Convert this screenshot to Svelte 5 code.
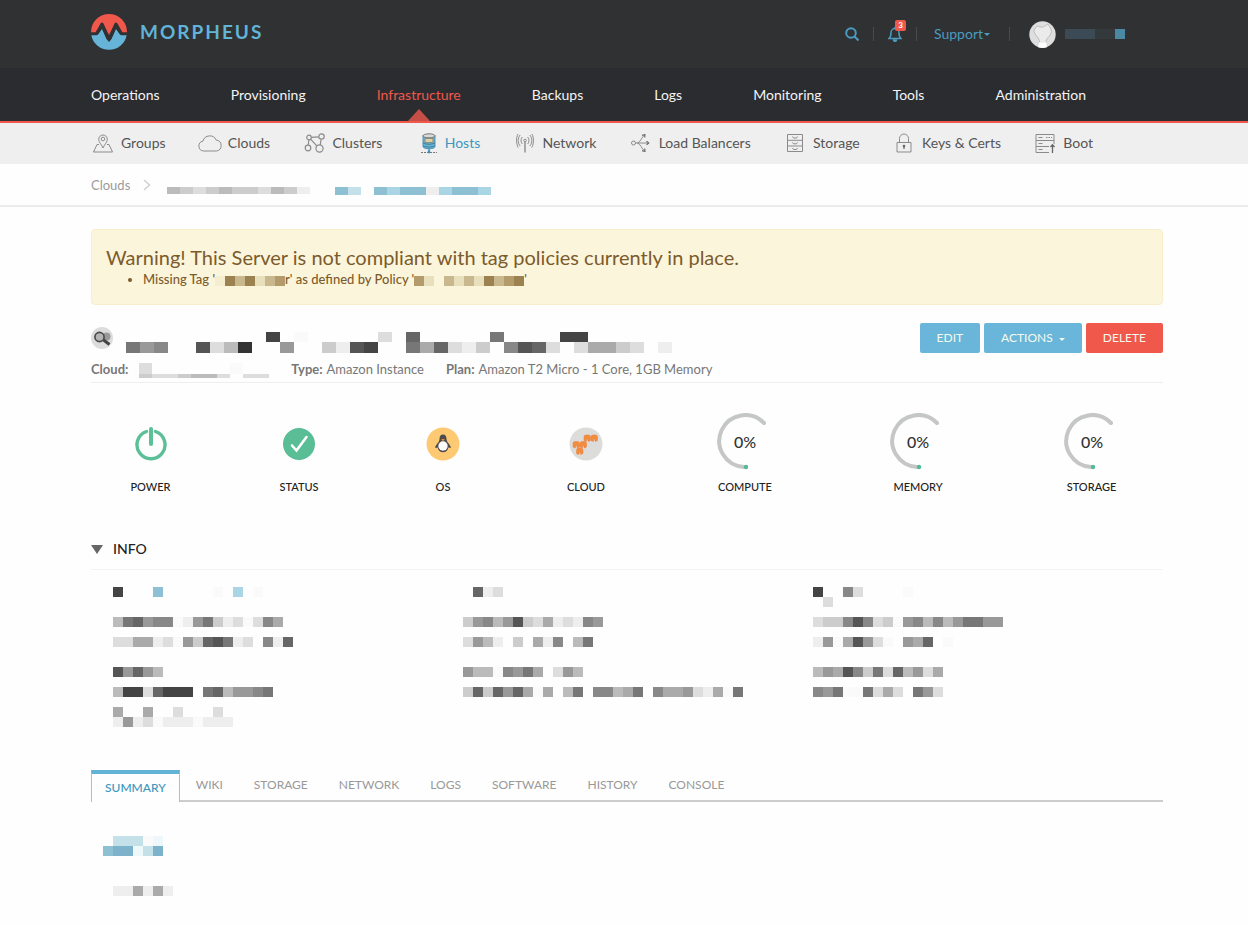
<script>
  const nav = ['Operations', 'Provisioning', 'Infrastructure', 'Backups', 'Logs', 'Monitoring', 'Tools', 'Administration'];
  const subnav = [
    ['Groups', 'groups'], ['Clouds', 'cloud'], ['Clusters', 'clusters'], ['Hosts', 'hosts'], ['Network', 'network'],
    ['Load Balancers', 'balancer'], ['Storage', 'storage'], ['Keys & Certs', 'lock'], ['Boot', 'boot']
  ];
  const tabs = ['SUMMARY', 'WIKI', 'STORAGE', 'NETWORK', 'LOGS', 'SOFTWARE', 'HISTORY', 'CONSOLE'];

  // One letter per cell: hex digits are greys, capitals are tints.
  const tints = {
    f: '#fafafa', A: '#7db2cb', B: '#8dc0d3', C: '#a9d5e4', D: '#c4e1ea', E: '#eef7fa',
    P: '#9c8251', Q: '#b39b6b', R: '#c9b88e', S: '#e8dfbd', T: '#f5edd0',
    U: '#3b4a54', V: '#34393c', W: '#4b88a4'
  };
  const colour = (c) => tints[c] ?? `#${c}${c}${c}`;

  function cells(rows, w, heights) {
    const out = [];
    let y = 0;
    rows.forEach((row, r) => {
      [...row].forEach((c, i) => {
        if (c !== '.') out.push({ x: i * w, y, h: heights[r], fill: colour(c) });
      });
      y += heights[r];
    });
    return { out, width: Math.max(...rows.map((r) => r.length)) * w, height: y };
  }

  // Columns of groups; each group is a list of lines, each line one or two cell rows.
  const info = [
    [
      [['4...B.....f.C.f']],
      [['b76988fe97cedfd8a'], ['ddaaedf9c657ed.8e6']],
      [['5969b'], ['b44d6444.76b9987'], ['a..a..d...d', 'e9edfeeefeee']]
    ],
    [
      [['.6ed']],
      [['c98b95cdaede89'], ['d9be.c.ae8.b7']],
      [['9bbf897a.d9b'], ['c6c696afa.b7.88ba7.8aa9deaf7']]
    ],
    [
      [['4..8d....f', '.d']],
      [['dcc858dcf98b8b97799'], ['e9fa59df.9a6.f']],
      [['b9a58c7d6b9da'], ['897ff7dad.79d']]
    ]
  ];
</script>

{#snippet mosaic(rows, w = 10, heights = [10, 10])}
  {@const m = cells(rows, w, heights)}
  <svg class="mosaic" width={m.width} height={m.height} shape-rendering="crispEdges" aria-hidden="true">
    {#each m.out as c}<rect x={c.x} y={c.y} width={w} height={c.h} fill={c.fill} />{/each}
  </svg>
{/snippet}

{#snippet icon(name)}
  <svg class="icon" width="24" height="24" viewBox="0 0 24 24" fill="none" stroke="#8b8b8b" stroke-width="1" stroke-linejoin="round" aria-hidden="true">
    {#if name === 'groups'}
      <path d="M12 17c-1-3-4.300-5.500-4.300-8.700a4.300 4.300 0 0 1 8.600 0C16.300 11.500 13 14 12 17z" />
      <circle cx="12" cy="8" r="1.800" />
      <path d="M8 13.500H6L2.500 21h19L18 13.500h-2" />
    {:else if name === 'cloud'}
      <path d="M5.500 20.500a5 5 0 0 1-.5-9.900 7 7 0 0 1 13.200-1 5.500 5.500 0 0 1 .3 10.900z" transform="translate(0 -.5)" />
    {:else if name === 'clusters'}
      <g stroke-width="1.200" transform="translate(1 0)">
        <circle cx="6" cy="6.500" r="2.300" /><circle cx="18.500" cy="5.500" r="2.700" />
        <circle cx="5" cy="17" r="2.800" /><circle cx="16.500" cy="17.500" r="3.600" />
        <path d="M8.500 6.300l7-.5M5.800 9l-.5 5M7.800 8.300l6 6.500M18 8.500l-.7 5.300" />
      </g>
    {:else if name === 'hosts'}
      <g transform="translate(2 0)">
        <path d="M6 4.500v11c0 3 12 3 12 0v-11z" fill="#68b5d5" stroke="#4e93b3" />
        <ellipse cx="12" cy="4.800" rx="6" ry="2" fill="#d8dcd4" stroke="#777" />
        <path d="M8 7.500h8v4H8z" fill="#ded1a8" stroke="#8c8a78" />
        <path d="M6 12c3 1.700 9 1.700 12 0M6 14.800c3 1.700 9 1.700 12 0" stroke="#3f7e9c" />
        <path d="M12 18v3" stroke="#3c92ba" stroke-width="1.500" />
        <path d="M4 21.500h16" stroke="#777" stroke-dasharray="2 1" /><circle cx="12" cy="21" r="1.400" fill="#3c92ba" stroke="none" />
      </g>
    {:else if name === 'network'}
      <circle cx="12" cy="9.500" r="1.300" /><path d="M12 11v10.500" stroke-width="1.400" />
      <path d="M9.300 13c-1.700-2-1.700-5 0-7M7.200 15c-2.700-3.200-2.700-7.800 0-11M5.200 16.500c-2.200-4.500-2.200-9.500-.2-13.500M14.700 13c1.700-2 1.700-5 0-7M16.800 15c2.700-3.200 2.700-7.800 0-11M18.800 16.500c2.200-4.500 2.200-9.500.2-13.500" />
    {:else if name === 'balancer'}
      <circle cx="4.500" cy="12" r="2" />
      <path d="M6.500 12H19.500M8.500 12c3-1 4-5.500 7-8M8.500 12c3 1 4 5.500 7 8" />
      <path d="M17.500 10.300l2.300 1.700-2.300 1.700M13 4.300l3-.8-.3 3M13 19.700l3 .8-.3-3" stroke="#6d6d6d" stroke-width="1.200" />
    {:else if name === 'storage'}
      <path d="M4.500 3.500h15v17h-15zM4.500 9.300h15M4.500 15h15" />
      <path d="M9.500 5.500l1 1.500h3l1-1.500M9.500 11.300l1 1.500h3l1-1.500M9.500 17l1 1.500h3l1-1.500" />
    {:else if name === 'lock'}
      <path d="M5 11.500h14v9.500H5zM7.500 11.500V7.500a4.500 4.500 0 0 1 9 0v4" />
      <path d="M12 14v4" stroke="#666" stroke-width="1.200" /><circle cx="12" cy="15" r="1.300" fill="#666" stroke="none" />
    {:else}
      <path d="M16 21.500H3V3.500h18V13M3 9.500h18M3 15.500h13M5.500 6.500h4M5.500 12.500h4M5.500 18.500h4" />
      <path d="M13 6.500h6" stroke-dasharray="1.500 1" /><path d="M19.500 22v-8M17.500 16l2-2.300 2 2.300" stroke="#666" stroke-width="1.300" />
    {/if}
  </svg>
{/snippet}

<header>
  <div class="top wrap">
    <a class="brand" href="#home">
      <svg width="36" height="36" viewBox="0 0 36 36" aria-hidden="true">
        <path d="M0 18a18 18 0 0 1 36 0v1H0z" fill="#f0584b" />
        <path d="M0.200 20.500h35.600A18 18 0 0 1 .2 20.500z" fill="#66b5d9" />
        <path d="M6 19l5-10 7 13.500L25 9l5 10-5 .5L18 28l-7-8.500z" fill="#2f3132" />
        <path d="M12.500 8h11L18 21.500z" fill="#f0584b" />
        <path d="M6 22l5-7 4 9-3 3zM30 22l-5-7-4 9 3 3z" fill="#66b5d9" />
        <path d="M0 19.800h5.500L11 10l7 15 7-15 5.500 9.800H36" fill="none" stroke="#2f3132" stroke-width="3" stroke-linejoin="round" />
      </svg>
      <span>MORPHEUS</span>
    </a>
    <div class="tools">
      <button class="plain" aria-label="Search">
        <svg width="14" height="14" viewBox="0 0 14 14" fill="none" stroke="#4c9bc0" stroke-width="2"><circle cx="6" cy="6" r="4.800" /><path d="M9.500 9.500l4 4" /></svg>
      </button>
      <i class="sep"></i>
      <button class="plain bell" aria-label="Notifications">
        <svg width="14" height="16" viewBox="0 0 14 16" fill="none" stroke="#4c9bc0" stroke-width="1.500"><path d="M1 12.500c2-1.500 2-3 2-6a4 4 0 0 1 8 0c0 3 0 4.500 2 6zM7 2.500V.8" /><path d="M5.500 14a1.500 1.300 0 0 0 3 0z" fill="#4c9bc0" /></svg>
        <b>3</b>
      </button>
      <i class="sep"></i>
      <button class="plain support">Support<i class="caret"></i></button>
      <i class="sep wide"></i>
      <a class="user" href="#user" aria-label="Account">
        <svg width="27" height="27" viewBox="0 0 27 27"><circle cx="13.500" cy="13.500" r="13.200" fill="#dedede" /><path d="M5 10.500c0-3 2-4.500 4-5.500 2 1.500 5 1.500 7 0l3-2c1 2 3.500 4.500 3.500 8-1 4-4 5-5.500 8.500v2c-2 1.300-4.500 1.300-6.500 0v-2C9 15.500 6 14.500 5 10.500z" fill="#ebebeb" stroke="#bdbdbd" /><path d="M10.500 21c2 1 4.500 1 6.500 0l1 5.300q-4.500 1.300-9 0z" fill="#fff" /></svg>
        {@render mosaic(['UUUVVW'])}
      </a>
    </div>
  </div>
  <nav class="main">
    <div class="wrap">
      {#each nav as item}
        <a href="#{item}" class:on={item === 'Infrastructure'}>{item}</a>
      {/each}
    </div>
  </nav>
</header>

<nav class="sub">
  <div class="wrap">
    {#each subnav as [label, name]}
      <a href="#{name}" class:on={label === 'Hosts'}>{@render icon(name)}{label}</a>
    {/each}
  </div>
</nav>

<div class="crumbs">
  <div class="wrap">
    <a href="#clouds">Clouds</a>
    <svg width="8" height="12" viewBox="0 0 8 12" fill="none" stroke="#d0d0d0" stroke-width="1.500"><path d="M1 1l5.500 5L1 11" /></svg>
    <span class="trail">
      {@render mosaic(['bcdcbccdbce'], 13, [7])}
      {@render mosaic(['BD.BCBBeCBBC'], 13, [8])}
    </span>
  </div>
</div>

<main class="wrap">
  <section class="alert">
    <h4>Warning! This Server is not compliant with tag policies currently in place.</h4>
    <ul>
      <li>Missing Tag '{@render mosaic(['TPRPSRQ'])}r' as defined by Policy '{@render mosaic(['QS.RSRSPRQP'])}'</li>
    </ul>
  </section>

  <section class="title">
    <div class="name">
      <svg width="22" height="22" viewBox="0 0 22 22" aria-hidden="true"><circle cx="11" cy="11" r="11" fill="#dcdcdc" /><circle cx="15.500" cy="9.500" r="4" fill="#999" /><circle cx="8.500" cy="10" r="4.600" fill="#b4b4b4" stroke="#4a4a4a" stroke-width="1.700" /><path d="M12.500 13l6 4.500" stroke="#444" stroke-width="3" /></svg>
      {@render mosaic(['..........4.f.....d.6.....7....44', '798..5db3..9..ce54..7a6dec.856d.daacd.e'], 14, [10, 11])}
    </div>
    <div class="buttons">
      <button>EDIT</button>
      <button>ACTIONS <i class="caret"></i></button>
      <button class="danger">DELETE</button>
    </div>
  </section>
  <section class="meta">
    <span><b>Cloud:</b> {@render mosaic(['d......f', 'cddcbbd.dd'], 13, [11, 4])}</span>
    <span><b>Type:</b> Amazon Instance</span>
    <span><b>Plan:</b> Amazon T2 Micro - 1 Core, 1GB Memory</span>
  </section>

  <section class="stats">
    <div>
      <svg width="34" height="58" viewBox="0 0 34 58" fill="none" stroke="#5bbf97" stroke-linecap="round"><path d="M12.500 18.500a14 14 0 1 0 9 0" stroke-width="3.400" /><path d="M17 16v15" stroke-width="4" /></svg>
      <span>POWER</span>
    </div>
    <div>
      <svg width="34" height="58" viewBox="0 0 34 58"><circle cx="17" cy="31" r="16" fill="#59be96" /><path d="M10 32.500l4.500 5 10-13.500" fill="none" stroke="#fff" stroke-width="2.600" stroke-linecap="round" /></svg>
      <span>STATUS</span>
    </div>
    <div>
      <svg width="34" height="58" viewBox="0 0 34 58"><circle cx="17" cy="31" r="16.500" fill="#fdc972" /><path d="M17 21.500c-2.500 0-3.500 2-3.500 4.500 0 3-2.500 4.500-3.500 6.500-.7 1.300-1 2-.5 2.500.7.300 1.500-.2 2-.8.500 3 2.700 5 5.500 5s5-2 5.500-5c.500.600 1.300 1.100 2 .8.500-.5.200-1.200-.5-2.500-1-2-3.500-3.500-3.500-6.500 0-2.500-1-4.500-3.500-4.500z" fill="#4c4c4c" /><circle cx="17" cy="33" r="4.700" fill="#fff" /><path d="M15.300 26h3.400L17 28.500z" fill="#f28b3a" /></svg>
      <span>OS</span>
    </div>
    <div>
      <svg width="34" height="58" viewBox="0 0 34 58">
        <circle cx="17" cy="31" r="16.500" fill="#dcdcdb" />
        {#each [[4, 28.5], [11, 28.5], [7.5, 35], [15, 22], [22, 22]] as [x, y]}
          <path d="M{x} {y + 2}q0-2 2-2h2.500q2 0 2 2v3.500l-1.500.800h-1v-2h-1.500v2H{x + 1.5}L{x} {y + 5.5}z" fill="#f28d3d" stroke="#ea7c37" stroke-width=".5" />
        {/each}
      </svg>
      <span>CLOUD</span>
    </div>
    {#each ['COMPUTE', 'MEMORY', 'STORAGE'] as g}
      <div>
        <svg class="gauge" width="58" height="58" viewBox="1 0 58 58" fill="none" role="img" aria-label="{g} 0%"><path d="M49 10A26 26 0 1 0 29 54" stroke="#c5c6c6" stroke-width="4" stroke-linecap="round" /><circle cx="31" cy="54" r="2.200" fill="#4fbd93" /><text x="30" y="35" text-anchor="middle">0%</text></svg>
        <span>{g}</span>
      </div>
    {/each}
  </section>

  <h3><button class="plain" aria-expanded="true"><i class="fold"></i>INFO</button></h3>
  <section class="info">
    {#each info as column}
      <div>
        {#each column as group}
          <div class="group">
            {#each group as line}<div class="line">{@render mosaic(line)}</div>{/each}
          </div>
        {/each}
      </div>
    {/each}
  </section>

  <div class="tabs" role="tablist">
    {#each tabs as tab, i}
      <button role="tab" aria-selected={i === 0} class:on={i === 0}>{tab}</button>
    {/each}
  </div>
  <section class="panel">
    {@render mosaic(['.DDDfE', 'BAAEDA'])}
    {@render mosaic(['.eeaeae'])}
  </section>
</main>

<style>
  :global(body) { margin: 0; background: #fefefe; }
  :global(#app) { font: 14px/20px Lato, "Open Sans", sans-serif; color: #444; }
  a { color: inherit; text-decoration: none; }
  button { font: inherit; color: inherit; border: 0; cursor: pointer; }
  .plain { background: none; padding: 0; display: flex; align-items: center; }
  svg { display: block; flex: none; }
  .wrap { padding: 0 85px 0 91px; }
  .caret { display: inline-block; border: 4px solid transparent; border-top-color: currentColor; border-bottom: 0; }

  header { background: #2f3132; }
  .top { display: flex; justify-content: space-between; align-items: center; height: 68px; }
  .brand { display: flex; align-items: center; gap: 13px; color: #62b3d8; font-size: 19px; font-weight: 700; letter-spacing: 2px; margin-bottom: 4px; }
  .tools { display: flex; align-items: center; color: #4c9bc0; margin-right: 38px; }
  .sep { width: 1px; height: 14px; background: #484a4b; margin: 0 14px; }
  .sep.wide { margin: 0 19px; }
  .bell { position: relative; }
  .bell b { position: absolute; left: 7px; top: -6px; width: 11px; height: 11px; border-radius: 2px; background: #f0584b; color: #fff; font-size: 8px; line-height: 11px; text-align: center; }
  .support { margin-left: 3px; }
  .support .caret { margin-left: 1px; border-width: 3px; border-bottom: 0; }
  .user { display: flex; align-items: center; gap: 9px; }

  .main { background: #2b2c30; border-bottom: 2px solid #f0584b; color: #f4f4f4; }
  .main .wrap { display: flex; justify-content: space-between; padding-right: 162px; }
  .main a { position: relative; padding: 17px 0 16px; }
  .main .on { color: #f0584b; }
  .main .on::after { content: ""; position: absolute; left: 50%; bottom: 0; margin-left: -11px; border: 11px solid transparent; border-top: 0; border-bottom: 12px solid #c54f47; }

  .sub { background: #efefef; color: #555; }
  .sub .wrap { display: flex; justify-content: space-between; padding-right: 155px; }
  .sub a { display: flex; align-items: center; gap: 6px; padding: 8px 0 9px; height: 24px; white-space: nowrap; }
  .sub .on { color: #3d97bd; }

  .crumbs { border-bottom: 2px solid #ebebeb; color: #9b9b9b; font-size: 13px; }
  .crumbs .wrap { display: flex; align-items: center; gap: 13px; height: 41px; }
  .trail { display: flex; gap: 25px; padding: 12px 0 0 3px; }

  main { padding-top: 22px !important; }
  .alert { background: #fbf5dc; border: 1px solid #faeecb; border-radius: 4px; padding: 15px 14px; color: #7c5b2b; }
  .alert h4 { margin: 0; font-size: 20px; font-weight: 400; line-height: 24px; }
  .alert ul { margin: 0; padding-left: 37px; font-size: 13px; font-weight: 500; }
  .alert .mosaic { display: inline-block; vertical-align: -2px; }

  .title { display: flex; justify-content: space-between; margin-top: 18px; }
  .name { display: flex; align-items: center; gap: 13px; }
  .name .mosaic { margin-top: 8px; }
  .buttons { display: flex; gap: 4px; }
  .buttons button { background: #69b6da; color: #f5faee; font-size: 12px; line-height: 30px; padding: 0 17px; border-radius: 2px; white-space: nowrap; }
  .buttons .danger { background: #f0584b; }
  .buttons .caret { margin-left: 3px; vertical-align: 1px; border-width: 3px; border-bottom: 0; }
  .meta { display: flex; gap: 22px; font-size: 13px; color: #777; padding: 6px 0 3px; border-bottom: 1px solid #efefef; }
  .meta span { white-space: nowrap; display: flex; gap: 4px; }
  .meta .mosaic { margin: 4px 0 0 7px; }

  .stats { display: grid; grid-template-columns: 119fr 178fr 110fr 176fr 142fr 204fr 143fr; padding-top: 30px; }
  .stats div { display: flex; flex-direction: column; align-items: center; gap: 6px; font-size: 11px; color: #222; font-weight: 500; }
  .gauge text { font-size: 16px; font-weight: 500; fill: #333; }

  h3 { margin: 42px 0 0; padding-bottom: 10px; border-bottom: 1px solid #f3f3f3; font-size: 14px; font-weight: 500; color: #222; }
  .fold { border: 6px solid transparent; border-top: 9px solid #666; border-bottom: 0; margin-right: 10px; }
  .info { display: grid; grid-template-columns: repeat(3, 1fr); padding: 17px 0 0 22px; }
  .group { margin-bottom: 10px; }
  .line { min-height: 20px; }

  .tabs { display: flex; gap: 1px; border-bottom: 2px solid #ccc; margin-top: 33px; }
  .tabs button { background: none; color: #999; font-size: 12px; padding: 0 15px; height: 30px; }
  .tabs .on { color: #3d97bd; background: #fefefe; border: 1px solid #bbb; border-top: 4px solid #62b3d6; border-bottom: 0; margin-bottom: -2px; padding: 0 13px; height: 32px; font-weight: 500; }
  .panel { display: grid; gap: 30px; padding: 34px 0 29px 12px; }
</style>
